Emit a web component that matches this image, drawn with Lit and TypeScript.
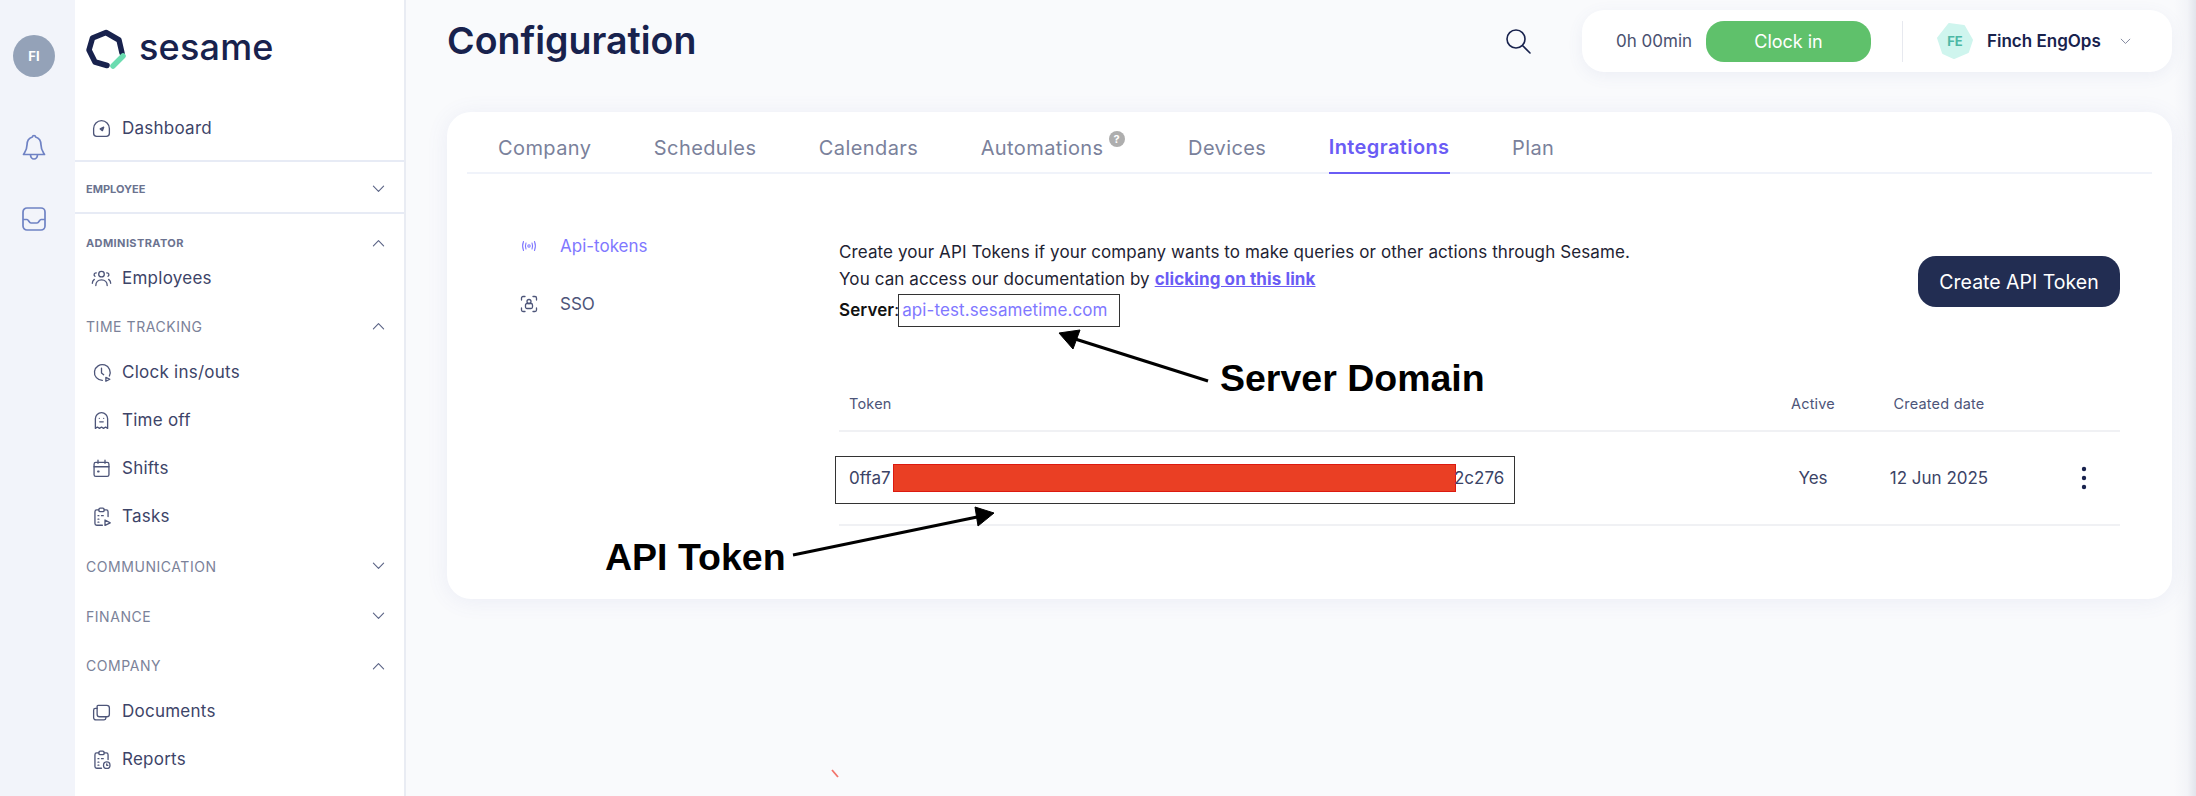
import { LitElement, html, css, svg } from "lit";
import { customElement } from "lit/decorators.js";

const ic = (body: unknown) => html`<svg class="ic" viewBox="0 0 24 24" fill="none" stroke="currentColor" stroke-width="1.500" stroke-linecap="round" stroke-linejoin="round">${body}</svg>`;
const icons: Record<string, unknown> = {
  dash: svg`<path d="M6.500 21h11a3.500 3.500 0 0 0 3.500-3.500V12a9 9 0 1 0-18 0v5.500A3.500 3.500 0 0 0 6.500 21z"/><path d="M10.500 12.500l4-2-1.500 4z" fill="currentColor"/>`,
  emp: svg`<circle cx="12" cy="7" r="3.200"/><path d="M5.500 20c0-3.500 2.500-6.500 6.500-6.500s6.500 3 6.500 6.500"/><path d="M6 5.500a2.200 2.200 0 0 0-1.500 4M18 5.500a2.200 2.200 0 0 1 1.500 4M1.500 17.500c0-2 .8-3.500 2.300-4.500M22.500 17.500c0-2-.8-3.500-2.300-4.500"/>`,
  clock: svg`<path d="M13 21a9 9 0 1 1 8-5"/><path d="M12 7v5.500l2.500 2"/><path d="M17 17.500l4.500 2.200-4.500 2.300z"/>`,
  off: svg`<path d="M5 21V10a7 7 0 0 1 14 0v11l-2.300-1.500L14.300 21 12 19.500 9.700 21l-2.400-1.500z"/><path d="M9.500 9.500h.01M14.500 9.500h.01M10 13.500h4"/>`,
  shift: svg`<rect x="3.500" y="5" width="17" height="16" rx="2"/><path d="M3.500 10h17M8 2.500V6M16 2.500V6"/><path d="M8 15.500h.8" stroke-width="2.200"/>`,
  task: svg`<path d="M9 4.500H6.500a2 2 0 0 0-2 2V20a2 2 0 0 0 2 2H13M15 4.500h2.500a2 2 0 0 1 2 2V12"/><rect x="9" y="2.500" width="6" height="4" rx="1.500"/><path d="M8 11h1M12 11h2M8 15h1M8 18.500h1"/><path d="M16 16l6 3.200-6 3z"/>`,
  docs: svg`<path d="M8 5h4l2 0h4a3 3 0 0 1 3 3v7a3 3 0 0 1-3 3H10a3 3 0 0 1-3-3V6a1 1 0 0 1 1-1z"/><path d="M7 8.500H5a2 2 0 0 0-2 2V19a2.500 2.500 0 0 0 2.500 2.500H15a2 2 0 0 0 2-2V18"/>`,
  rep: svg`<path d="M9 4.500H6.500a2 2 0 0 0-2 2V20a2 2 0 0 0 2 2H12M15 4.500h2.500a2 2 0 0 1 2 2V12"/><rect x="9" y="2.500" width="6" height="4" rx="1.500"/><path d="M8 11h1M12 11h2M8 15h1M8 18.500h1"/><circle cx="18" cy="18.500" r="3.700"/><path d="M18 17v1.700h1.300"/>`,
};
const chevUp = html`<svg class="chev" viewBox="0 0 14 8" fill="none" stroke="currentColor" stroke-width="1.200" stroke-linecap="round" stroke-linejoin="round"><path d="M1.500 7L7 1.500 12.500 7"/></svg>`;
const chevDown = html`<svg class="chev" viewBox="0 0 14 8" fill="none" stroke="currentColor" stroke-width="1.200" stroke-linecap="round" stroke-linejoin="round"><path d="M1.500 1L7 6.500 12.500 1"/></svg>`;

type Row = { k: "item" | "sec"; t: string; i?: string; up?: boolean; c?: string };
const nav: Row[] = [
  { k: "sec", t: "EMPLOYEE", c: "role first" },
  { k: "sec", t: "ADMINISTRATOR", up: true, c: "role second" },
  { k: "item", t: "Employees", i: "emp", c: "short" },
  { k: "sec", t: "TIME TRACKING", up: true, c: "tt" },
  { k: "item", t: "Clock ins/outs", i: "clock" },
  { k: "item", t: "Time off", i: "off" },
  { k: "item", t: "Shifts", i: "shift" },
  { k: "item", t: "Tasks", i: "task" },
  { k: "sec", t: "COMMUNICATION", c: "comm" },
  { k: "sec", t: "FINANCE", c: "fin" },
  { k: "sec", t: "COMPANY", up: true, c: "comp" },
  { k: "item", t: "Documents", i: "docs" },
  { k: "item", t: "Reports", i: "rep" },
];
const tabs = ["Company", "Schedules", "Calendars", "Automations", "Devices", "Integrations", "Plan"];

@customElement("app-root")
export class AppRoot extends LitElement {
  static styles = css`
    :host { display: block; width: 2196px; height: 796px; overflow: hidden; position: relative; font-family: "Inter", "Lato", sans-serif; color: #2b3356; background: #f9fafc; }
    .page { display: flex; height: 796px; }
    .rail { width: 75px; flex: none; background: #f2f4fa; display: flex; flex-direction: column; align-items: center; padding: 35px 7px 0 0; box-sizing: border-box; }
    .me { width: 42px; height: 42px; border-radius: 50%; background: #94a2b8; color: #fff; font-size: 13px; font-weight: 700; display: flex; align-items: center; justify-content: center; }
    .rail svg { width: 26px; height: 28px; color: #6f82c4; }
    .bell { margin-top: 56px; }
    .inbox { margin-top: 44px; }
    .side { width: 331px; flex: none; background: #fff; border-right: 2px solid #e9ecf3; box-sizing: border-box; overflow: hidden; }
    .logo { height: 104px; padding: 29px 0 0 11px; box-sizing: border-box; display: flex; align-items: flex-start; gap: 11px; }
    .logo svg { width: 42px; height: 42px; flex: none; }
    .word { font-size: 36px; font-weight: 500; line-height: 36px; color: #18224d; letter-spacing: .2px; }
    .item { height: 48px; display: flex; align-items: center; padding-left: 16px; gap: 10px; font-size: 17px; letter-spacing: .25px; color: #3d4468; box-sizing: border-box; }
    .ic { width: 21px; height: 21px; flex: none; color: #4d5579; }
    .item.short { height: 40px; }
    .dash { height: 58px; padding-bottom: 8px; border-bottom: 2px solid #e7ebf5; }
    .sec { display: flex; align-items: center; justify-content: space-between; padding: 0 19px 0 11px; box-sizing: border-box; font-size: 14px; letter-spacing: .55px; color: #7b8299; }
    .sec .chev { width: 13px; height: 8px; color: #5a6385; }
    .role { font-size: 11px; font-weight: 700; color: #6b7390; letter-spacing: .4px; }
    .first { height: 52px; border-bottom: 2px solid #e7ebf5; padding-top: 4px; letter-spacing: 0; }
    .second { height: 44px; padding-top: 13px; }
    .tt { height: 50px; padding-top: 6px; }
    .comm { height: 52px; }
    .fin { height: 48px; }
    .comp { height: 47px; padding-top: 4px; }
    .main { flex: 1; padding: 0 24px 0 41px; display: flex; flex-direction: column; min-width: 0; }
    .head { height: 112px; flex: none; display: flex; justify-content: space-between; align-items: flex-start; }
    h1 { margin: 0; font-size: 37.500px; font-weight: 600; line-height: 82px; color: #18224d; }
    .tools { display: flex; align-items: center; gap: 50px; padding-top: 10px; }
    .search { width: 28px; height: 28px; color: #18224d; }
    .pill { width: 590px; height: 62px; box-sizing: border-box; background: #fff; border-radius: 22px; box-shadow: 0 4px 16px rgba(90, 100, 160, .08); display: flex; align-items: center; padding-left: 34px; font-size: 17px; }
    .time { color: #4a5170; width: 90px; flex: none; white-space: nowrap; }
    .clock { width: 165px; height: 41px; border-radius: 18px; background: #5fc16b; color: #fff; display: flex; align-items: center; justify-content: center; font-size: 18px; flex: none; }
    .vr { width: 1px; height: 41px; background: #e7e9ef; margin: 0 34px 0 31px; flex: none; }
    .hex { width: 36px; height: 36px; flex: none; }
    .who { margin-left: 14px; font-size: 17px; font-weight: 600; color: #18224d; width: 133px; white-space: nowrap; }
    .who + .chev { width: 11px; height: 7px; color: #7b8299; }
    .card { height: 487px; flex: none; background: #fff; border-radius: 24px; box-shadow: 0 2px 22px rgba(90, 100, 180, .09); padding: 0 20px; box-sizing: border-box; }
    .tabs { height: 62px; box-sizing: border-box; display: flex; padding-left: 31px; gap: 62.500px; border-bottom: 2px solid #f0f3fa; font-size: 20px; letter-spacing: .4px; color: #7a819b; }
    .tab { display: flex; align-items: center; height: 62px; padding-top: 10px; box-sizing: border-box; position: relative; }
    .tab.on { color: #6a5cf5; font-weight: 600; border-bottom: 2px solid #6a5cf5; }
    .tab.hasq { margin-right: 22px; }
    .q { position: absolute; right: -21px; top: 19px; width: 16px; height: 16px; border-radius: 50%; background: #aeaeae; color: #fff; font-size: 11px; font-weight: 700; letter-spacing: 0; display: flex; align-items: center; justify-content: center; }
    .body { display: flex; padding-top: 72px; }
    .sub { width: 372px; flex: none; padding-left: 53px; box-sizing: border-box; font-size: 17px; color: #4d5579; }
    .sub div { height: 58px; display: flex; align-items: flex-start; gap: 22px; line-height: 40px; margin-top: -20px; margin-bottom: 20px; }
    .sub .on { color: #7f78ff; }
    .sub svg { width: 18px; height: 18px; margin-top: 11px; flex: none; }
    .content { width: 1281px; flex: none; }
    .top { display: flex; justify-content: space-between; height: 130px; }
    .intro { font-size: 17px; letter-spacing: .1px; line-height: 27px; color: #1e2333; margin-top: -7px; }
    .intro p { margin: 0; }
    .intro .srv { line-height: 38px; margin-top: -2px; }
    a { color: #6a5cf5; font-weight: 700; }
    .srv b { color: #111; font-weight: 600; }
    .srv span { color: #7f78ff; margin-left: 3px; }
    .btn { width: 202px; height: 51px; margin-top: 10px; border-radius: 18px; background: #222d52; color: #fff; font-size: 19.500px; display: flex; align-items: center; justify-content: center; }
    .grid { display: grid; grid-template-columns: 929px 90px 162px 100px; align-items: center; }
    .th { height: 54px; border-bottom: 2px solid #f0f1f4; font-size: 14.500px; letter-spacing: .2px; color: #4d5579; }
    .tr { height: 92px; border-bottom: 2px solid #f0f1f4; font-size: 17px; color: #3b4366; }
    .grid > div { text-align: center; }
    .grid > div:first-child { text-align: left; padding-left: 10px; }
    .tok { display: flex; align-items: center; }
    .tok span:first-child { width: 44px; flex: none; }
    .red { width: 563px; height: 28px; box-sizing: border-box; background: #ea3f24; border: 1px solid #dc1a10; flex: none; margin-right: -2px; }
    .keb { display: flex; justify-content: flex-end; padding-right: 30px; }
    .keb svg { width: 12px; height: 24px; }
    .over { position: absolute; left: 0; top: 0; width: 2196px; height: 796px; pointer-events: none; }
    .note { position: absolute; font-family: "Liberation Sans", Arial, sans-serif; font-weight: 700; font-size: 37.500px; line-height: 40px; color: #000; white-space: nowrap; }
    .n1 { left: 1220px; top: 358px; }
    .n2 { left: 605px; top: 537px; }
    .box { position: absolute; border: 1.500px solid #333; box-sizing: border-box; }
    .b1 { left: 898px; top: 294px; width: 222px; height: 33px; }
    .b2 { left: 835px; top: 456px; width: 680px; height: 48px; }
    .shade { position: absolute; right: 0; top: 0; width: 22px; height: 796px; background: linear-gradient(90deg, rgba(225,227,235,0), rgba(225,227,235,.25) 60%, rgba(225,227,235,.95)); }
  `;

  render() {
    return html`
      <div class="page">
        <div class="rail">
          <div class="me">FI</div>
          <svg class="bell" viewBox="0 0 26 28" fill="none" stroke="currentColor" stroke-width="1.700" stroke-linejoin="round"><path d="M13 2.500c-1 0-1.500.6-1.600 1.500C7.800 5 6 8 6 12c0 5-2 7-3.500 9.500h21C22 19 20 17 20 12c0-4-1.800-7-5.400-8-.1-.9-.6-1.500-1.600-1.500z"/><path d="M9.500 21.500c0 2.500 1.500 4.500 3.500 4.500s3.500-2 3.500-4.500"/></svg>
          <svg class="inbox" viewBox="0 0 26 28" fill="none" stroke="currentColor" stroke-width="1.700" stroke-linejoin="round"><rect x="2" y="3" width="22" height="22" rx="4"/><path d="M2 14.500h4c1.500 0 2 3.500 4 3.500h6c2 0 2.500-3.500 4-3.500h4"/></svg>
        </div>
        <div class="side">
          <div class="logo">
            <svg viewBox="0 0 42 42" fill="none" stroke-width="5.500" stroke-linejoin="round" stroke-linecap="round"><path d="M36 24 L33 11 L20 3.500 L6.500 9 L3 21 L9 33 L21 36.500" stroke="#18224d"/><path d="M27 37 L37 27" stroke="#6bdcb0"/></svg>
            <span class="word">sesame</span>
          </div>
          <div class="item dash">${ic(icons.dash)}Dashboard</div>
          ${nav.map((r) =>
            r.k === "item"
              ? html`<div class="item ${r.c ?? ""}">${ic(icons[r.i!])}${r.t}</div>`
              : html`<div class="sec ${r.c ?? ""}"><span>${r.t}</span>${r.up ? chevUp : chevDown}</div>`
          )}
        </div>
        <div class="main">
          <div class="head">
            <h1>Configuration</h1>
            <div class="tools">
              <svg class="search" viewBox="0 0 28 28" fill="none" stroke="currentColor" stroke-width="1.600" stroke-linecap="round"><circle cx="12" cy="12" r="9"/><path d="M18.500 18.500L26 26"/></svg>
              <div class="pill">
                <span class="time">0h 00min</span>
                <span class="clock">Clock in</span>
                <span class="vr"></span>
                <svg class="hex" viewBox="0 0 36 36"><path d="M12 1 L27 3 L35 17 L31 29 L17 35 L6 30 L1 15 Z" fill="#cff5ee" stroke="#cff5ee" stroke-width="2" stroke-linejoin="round"/><text x="18" y="23" text-anchor="middle" font-size="13" font-weight="700" fill="#4cb8a5" font-family="Inter, sans-serif">FE</text></svg>
                <span class="who">Finch EngOps</span>
                ${chevDown}
              </div>
            </div>
          </div>
          <div class="card">
            <div class="tabs">
              ${tabs.map((t) => html`<div class="tab ${t === "Integrations" ? "on" : ""} ${t === "Automations" ? "hasq" : ""}">${t}${t === "Automations" ? html`<span class="q">?</span>` : ""}</div>`)}
            </div>
            <div class="body">
              <div class="sub">
                <div class="on"><svg viewBox="0 0 18 18" fill="none" stroke="currentColor" stroke-width="1.100" stroke-linecap="round"><circle cx="9" cy="9" r="1.200"/><path d="M6 6C5.200 8 5.200 10 6 12M12 6c.8 2 .8 4 0 6M3.500 4.500c-1.200 3-1.200 6 0 9M14.500 4.500c1.200 3 1.200 6 0 9"/></svg>Api-tokens</div>
                <div><svg viewBox="0 0 18 18" fill="none" stroke="currentColor" stroke-width="1.300" stroke-linecap="round"><path d="M1.500 5V3a1.500 1.500 0 0 1 1.500-1.500h2M13 1.500h2A1.500 1.500 0 0 1 16.500 3v2M1.500 13v2A1.500 1.500 0 0 0 3 16.500h2M13 16.500h2a1.500 1.500 0 0 0 1.500-1.500v-2"/><circle cx="9" cy="6.500" r="2"/><rect x="5.500" y="8.500" width="7" height="5" rx="1.500"/></svg>SSO</div>
              </div>
              <div class="content">
                <div class="top">
                  <div class="intro">
                    <p>Create your API Tokens if your company wants to make queries or other actions through Sesame.</p>
                    <p>You can access our documentation by <a href="#">clicking on this link</a></p>
                    <p class="srv"><b>Server</b>:<span>api-test.sesametime.com</span></p>
                  </div>
                  <div class="btn">Create API Token</div>
                </div>
                <div class="grid th"><div>Token</div><div>Active</div><div>Created date</div><div></div></div>
                <div class="grid tr">
                  <div class="tok"><span>0ffa7</span><span class="red"></span><span>2c276</span></div>
                  <div>Yes</div>
                  <div>12 Jun 2025</div>
                  <div class="keb"><svg viewBox="0 0 12 24" fill="#18224d"><circle cx="6" cy="3" r="2.200"/><circle cx="6" cy="12" r="2.200"/><circle cx="6" cy="21" r="2.200"/></svg></div>
                </div>
              </div>
            </div>
          </div>
        </div>
      </div>
      <div class="shade"></div>
      <div class="over">
        <div class="box b1"></div>
        <div class="box b2"></div>
        <div class="note n1">Server Domain</div>
        <div class="note n2">API Token</div>
        <svg width="2196" height="796" viewBox="0 0 2196 796" fill="#000" stroke="#000">
          <path d="M1208 381L1072 338" stroke-width="3.200"/><path d="M1059 333L1080 330L1073 349Z" stroke-width="1"/>
          <path d="M793 555L982 516" stroke-width="3.200"/><path d="M994 513L975 507L978 526Z" stroke-width="1"/>
          <path d="M832 770L838 777" stroke="#f2736a" stroke-width="1.800" fill="none"/>
        </svg>
      </div>
    `;
  }
}
